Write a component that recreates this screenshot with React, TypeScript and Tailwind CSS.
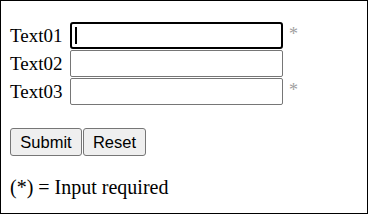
import React from 'react'

const rows = [
    { label: 'Text01', required: true, focused: true },
    { label: 'Text02', required: false, focused: false },
    { label: 'Text03', required: true, focused: false },
]

export default function App() {
    return (
        <div className="w-[368px] h-[214px] border border-black bg-white pl-[9px] pt-[21px] font-['Liberation_Serif',serif] text-[19px] text-black">
            <div className="flex flex-col gap-[1px]">
                {rows.map((row) => (
                    <div key={row.label} className="flex items-center h-[27px]">
                        <span className="w-[60px] leading-none">{row.label}</span>
                        <div className="relative">
                            <input
                                type="text"
                                className={`block w-[213px] h-[27px] bg-white outline-none ${row.focused ? 'border-2 border-black rounded-[3px]' : 'border border-[#767676] rounded-[2px]'}`}
                            />
                            {row.focused && (
                                <span className="absolute left-[5px] top-[5px] w-[2px] h-[17px] bg-black" />
                            )}
                        </div>
                        {row.required && (
                            <span className="self-start ml-[6px] mt-[1px] text-[18px] text-[#a0a0a0] leading-[22px]">*</span>
                        )}
                    </div>
                ))}
            </div>

            <div className="flex mt-[23px]">
                <button className="w-[72px] h-[28px] bg-[#efefef] border border-[#767676] rounded-[3px] font-['Liberation_Sans',sans-serif] text-[16.5px] text-black">
                    Submit
                </button>
                <button className="w-[63px] h-[28px] ml-[1px] bg-[#efefef] border border-[#767676] rounded-[3px] font-['Liberation_Sans',sans-serif] text-[16.5px] text-black">
                    Reset
                </button>
            </div>

            <p className="mt-[21px] text-[20px] leading-none">(*) = Input required</p>
        </div>
    )
}
